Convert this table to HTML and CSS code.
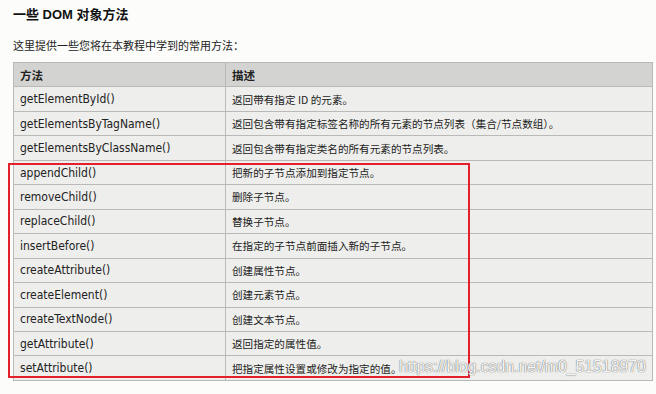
FILE: index.html
```html
<!DOCTYPE html>
<html lang="zh">
<head>
<meta charset="utf-8">
<link rel="stylesheet" href="styles.css">
</head>
<body>
<div class="page">
  <h2 class="title">一些 DOM 对象方法</h2>
  <p class="intro">这里提供一些您将在本教程中学到的常用方法：</p>
  <div class="wrap">
    <table class="ref">
      <thead>
        <tr><th class="c1">方法</th><th>描述</th></tr>
      </thead>
      <tbody>
        <tr><td class="c1">getElementById()</td><td>返回带有指定 ID 的元素。</td></tr>
        <tr><td class="c1">getElementsByTagName()</td><td>返回包含带有指定标签名称的所有元素的节点列表（集合/节点数组）。</td></tr>
        <tr><td class="c1">getElementsByClassName()</td><td>返回包含带有指定类名的所有元素的节点列表。</td></tr>
        <tr><td class="c1">appendChild()</td><td>把新的子节点添加到指定节点。</td></tr>
        <tr><td class="c1">removeChild()</td><td>删除子节点。</td></tr>
        <tr><td class="c1">replaceChild()</td><td>替换子节点。</td></tr>
        <tr><td class="c1">insertBefore()</td><td>在指定的子节点前面插入新的子节点。</td></tr>
        <tr><td class="c1">createAttribute()</td><td>创建属性节点。</td></tr>
        <tr><td class="c1">createElement()</td><td>创建元素节点。</td></tr>
        <tr><td class="c1">createTextNode()</td><td>创建文本节点。</td></tr>
        <tr><td class="c1">getAttribute()</td><td>返回指定的属性值。</td></tr>
        <tr><td class="c1">setAttribute()</td><td>把指定属性设置或修改为指定的值。</td></tr>
      </tbody>
    </table>
    <div class="highlight"></div>
    <div class="watermark">https://blog.csdn.net/m0_51518970</div>
  </div>
</div>
</body>
</html>
```
FILE: styles.css
```css
html, body {
  margin: 0;
  padding: 0;
  background: #fcfdfb;
}
body {
  width: 656px;
  height: 394px;
  overflow: hidden;
  font-family: "Liberation Sans", "Noto Sans CJK SC", sans-serif;
  color: #111;
}
.page {
  padding: 6px 0 0 13px;
}
.title {
  margin: 0;
  font-size: 13px;
  line-height: 18px;
  font-weight: bold;
  color: #111;
}
.intro {
  margin: 12px 0 0 0;
  font-family: "Noto Sans CJK SC", sans-serif;
  font-size: 11px;
  line-height: 19px;
  color: #222;
}
.wrap {
  position: relative;
  margin-top: 7px;
  width: 640px;
}
.ref {
  border-collapse: collapse;
  width: 640px;
  table-layout: fixed;
  font-family: "DejaVu Sans Condensed", "DejaVu Sans", "Noto Sans CJK SC", sans-serif;
  font-size: 12px;
  color: #222;
}
.ref tr {
  height: 24.46px;
}
.ref th, .ref td {
  border: 1px solid #b9bab7;
  padding: 0 0 0 6px;
  text-align: left;
  white-space: nowrap;
  overflow: hidden;
}
.ref th {
  background: #d3d4d1;
  font-family: "Noto Sans CJK SC", sans-serif;
  font-weight: bold;
  font-size: 11.5px;
}
.ref td {
  background: #eeeeec;
}
.ref td:not(.c1) {
  font-family: "Noto Sans CJK SC", sans-serif;
  font-size: 10.6px;
}
.ref .c1 {
  width: 205px;
}
.highlight {
  position: absolute;
  left: -5px;
  top: 101px;
  width: 462px;
  height: 215px;
  border: 2px solid #e3202b;
  box-sizing: border-box;
}
.watermark {
  position: absolute;
  left: 386px;
  top: 296px;
  font-family: "Liberation Sans", sans-serif;
  font-size: 15.8px;
  color: rgba(255, 255, 255, 0.95);
  text-shadow: 0 0 1px rgba(90, 90, 90, 0.9), 0 0 1px rgba(90, 90, 90, 0.6);
  white-space: nowrap;
}
```
